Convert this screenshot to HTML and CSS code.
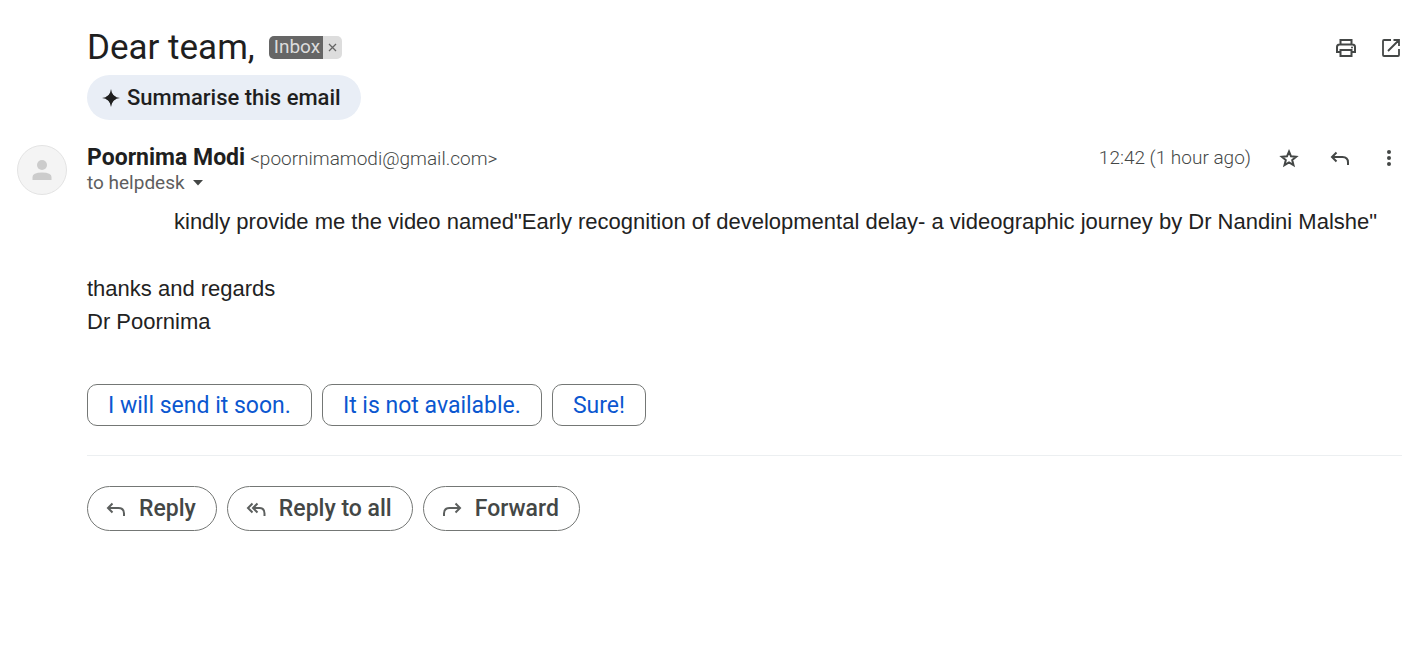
FILE: index.html
```html
<!DOCTYPE html>
<html lang="en">
<head>
<meta charset="utf-8">
<meta name="viewport" content="width=device-width, initial-scale=1">
<title>Dear team,</title>
<link rel="stylesheet" href="styles.css">
</head>
<body>
<main class="mail">
  <header class="subject-row">
    <h1 class="subject">Dear team,</h1>
    <span class="label"><span class="label-name">Inbox</span><button class="label-remove" type="button" aria-label="Remove label Inbox"><svg width="9" height="9" viewBox="0 0 9 9"><path d="M1 1l7 7M8 1l-7 7" fill="none" stroke="#666" stroke-width="1.3"/></svg></button></span>
    <div class="tools">
      <button class="icon-button" type="button" aria-label="Print all"><svg width="22" height="20" viewBox="0 0 22 20"><path d="M5.500 6V2h11v4M5.500 14H2V9q0-2.500 2.500-2.500h13q2.500 0 2.500 2.500v5h-3.500M5.500 12h11v6h-11z" fill="none" stroke="#444746" stroke-width="2"/><circle cx="17" cy="9.500" r="1" fill="#444746"/></svg></button>
      <button class="icon-button" type="button" aria-label="Open in new window"><svg width="20" height="20" viewBox="0 0 20 20"><path d="M10 2H3q-1 0-1 1v14q0 1 1 1h14q1 0 1-1v-6M12.500 2H18v6M18 2L7 13" fill="none" stroke="#444746" stroke-width="1.800"/></svg></button>
    </div>
  </header>
  <button class="summarise" type="button"><svg width="18" height="20" viewBox="0 0 18 20"><path d="M9 1Q9.800 9.200 18 10Q9.800 10.800 9 19Q8.200 10.800 0 10Q8.200 9.200 9 1Z" fill="#1f1f1f"/><path d="M9 5Q9.800 9.200 14 10Q9.800 10.800 9 15Q8.200 10.800 4 10Q8.200 9.200 9 5Z" fill="#1f1f1f" stroke="#1f1f1f" stroke-width="2"/></svg>Summarise this email</button>
  <section class="message">
    <svg class="avatar" width="50" height="50" viewBox="0 0 50 50" role="img" aria-label="Poornima Modi"><circle cx="25" cy="25" r="24.500" fill="#f4f4f4" stroke="#e3e3e3"/><circle cx="25" cy="20" r="5" fill="#ccc"/><path d="M15.500 35v-3q0-4.500 9.500-4.500t9.500 4.500v3z" fill="#ccc"/></svg>
    <div class="content">
      <div class="sender-row">
        <div class="sender"><h2 class="name">Poornima Modi</h2><span class="address">&lt;poornimamodi@gmail.com&gt;</span></div>
        <time class="time">12:42 (1 hour ago)</time>
        <div class="actions">
          <button class="icon-button" type="button" aria-label="Star"><svg width="20" height="20" viewBox="0 0 20 20"><path d="M10 3.500l2 4.800 5.200.4-4 3.400 1.300 5.100-4.500-2.700-4.500 2.700 1.300-5.100-4-3.400 5.200-.4z" fill="none" stroke="#444746" stroke-width="2"/></svg></button>
          <button class="icon-button" type="button" aria-label="Reply"><svg width="20" height="16" viewBox="0 0 20 16"><path d="M6.500 2.500L2 7l4.500 4.500M2 7h10.500q5.500 0 5.500 5.500V15" fill="none" stroke="#444746" stroke-width="2"/></svg></button>
          <button class="icon-button" type="button" aria-label="More"><svg width="6" height="18" viewBox="0 0 6 18"><g fill="#444746"><circle cx="3" cy="3" r="2"/><circle cx="3" cy="9" r="2"/><circle cx="3" cy="15" r="2"/></g></svg></button>
        </div>
      </div>
      <button class="recipient" type="button">to helpdesk<svg width="10" height="6" viewBox="0 0 10 6"><path d="M0 0h10L5 5.500z" fill="#444746"/></svg></button>
      <div class="body">
        <p class="request">kindly provide me the video named"Early recognition of developmental delay- a videographic journey by Dr Nandini Malshe"</p>
        <p>thanks and regards<br>Dr Poornima</p>
      </div>
      <div class="suggestions">
        <button class="suggestion" type="button">I will send it soon.</button>
        <button class="suggestion" type="button">It is not available.</button>
        <button class="suggestion" type="button">Sure!</button>
      </div>
      <footer class="replies">
        <button class="reply" type="button"><svg width="20" height="16" viewBox="0 0 20 16"><path d="M6.500 2.500L2 7l4.500 4.500M2 7h10.500q5.500 0 5.500 5.500V15" fill="none" stroke="#5c5f5e" stroke-width="2"/></svg>Reply</button>
        <button class="reply" type="button"><svg width="20" height="16" viewBox="0 0 20 16"><path d="M6.500 2.500L2 7l4.500 4.500M11.500 2.500L7 7l4.500 4.500M7 7h6.500q5 0 5 5.500V15" fill="none" stroke="#5c5f5e" stroke-width="2"/></svg>Reply to all</button>
        <button class="reply" type="button"><svg width="20" height="16" viewBox="0 0 20 16"><path d="M13.500 2.500L18 7l-4.500 4.500M18 7H7.500Q2 7 2 12.500V15" fill="none" stroke="#5c5f5e" stroke-width="2"/></svg>Forward</button>
      </footer>
    </div>
  </section>
</main>
</body>
</html>
```

FILE: styles.css
```css
* { box-sizing: border-box; }
body { margin: 0; background: #fff; color: #1f1f1f; font-family: Roboto, "Liberation Sans", sans-serif; }
button { margin: 0; padding: 0; border: 0; background: none; color: inherit; font: inherit; cursor: pointer; }
svg { display: block; flex: none; }
h1, h2, p { margin: 0; }

.mail { padding: 25px 21px 0 17px; }
.subject-row { display: flex; align-items: center; height: 45px; margin-left: 70px; }
.subject { font-size: 35px; line-height: 44px; font-weight: 400; }
.label { display: flex; height: 23px; margin-left: 14px; border-radius: 5px; overflow: hidden; font-size: 19px; line-height: 21px; }
.label-name { padding: 0 3px 0 5px; background: #666; color: #ddd; }
.label-remove { display: grid; place-items: center; width: 19px; background: #ddd; }
.tools { display: flex; gap: 24px; margin-left: auto; padding-right: 1px; }
.icon-button { display: grid; place-items: center; }

.summarise { display: flex; align-items: center; gap: 7px; height: 45px; margin: 5px 0 0 70px; padding: 0 20px 0 15px; border-radius: 23px; background: #e9eef6; font-size: 22px; font-weight: 500; }

.message { display: flex; gap: 20px; margin-top: 25px; }
.avatar { flex: none; }
.content { flex: 1; min-width: 0; }
.sender-row { display: flex; align-items: center; height: 25px; color: #5e5e5e; font-size: 19px; }
.sender { display: flex; align-items: baseline; gap: 5px; margin-right: auto; }
.name { color: #1f1f1f; font-size: 23px; line-height: 25px; font-weight: 700; }
.address, .time { color: #444746; font-weight: 300; }
.actions { display: flex; gap: 31px; margin-left: 28px; padding-right: 10px; }
.actions .icon-button:last-child { margin-left: 5px; }
.recipient { display: flex; align-items: center; gap: 8px; height: 25px; color: #5e5e5e; font-size: 19px; }

.body { margin-top: 10px; color: #222; font-family: "Liberation Sans", Arial, sans-serif; font-size: 22px; line-height: 33px; }
.request { margin-bottom: 34px; padding-left: 87px; }

.suggestions { display: flex; gap: 10px; margin-top: 46px; }
.suggestion { height: 42px; padding: 0 20px; border: 1px solid #747775; border-radius: 10px; color: #0b57d0; font-size: 23px; }
.replies { display: flex; gap: 10px; margin-top: 29px; padding-top: 30px; border-top: 1px solid #eceff1; }
.reply { display: flex; align-items: center; gap: 13px; height: 45px; padding: 0 20px 0 18px; border: 1px solid #747775; border-radius: 23px; color: #444746; font-size: 23px; font-weight: 500; }
```
